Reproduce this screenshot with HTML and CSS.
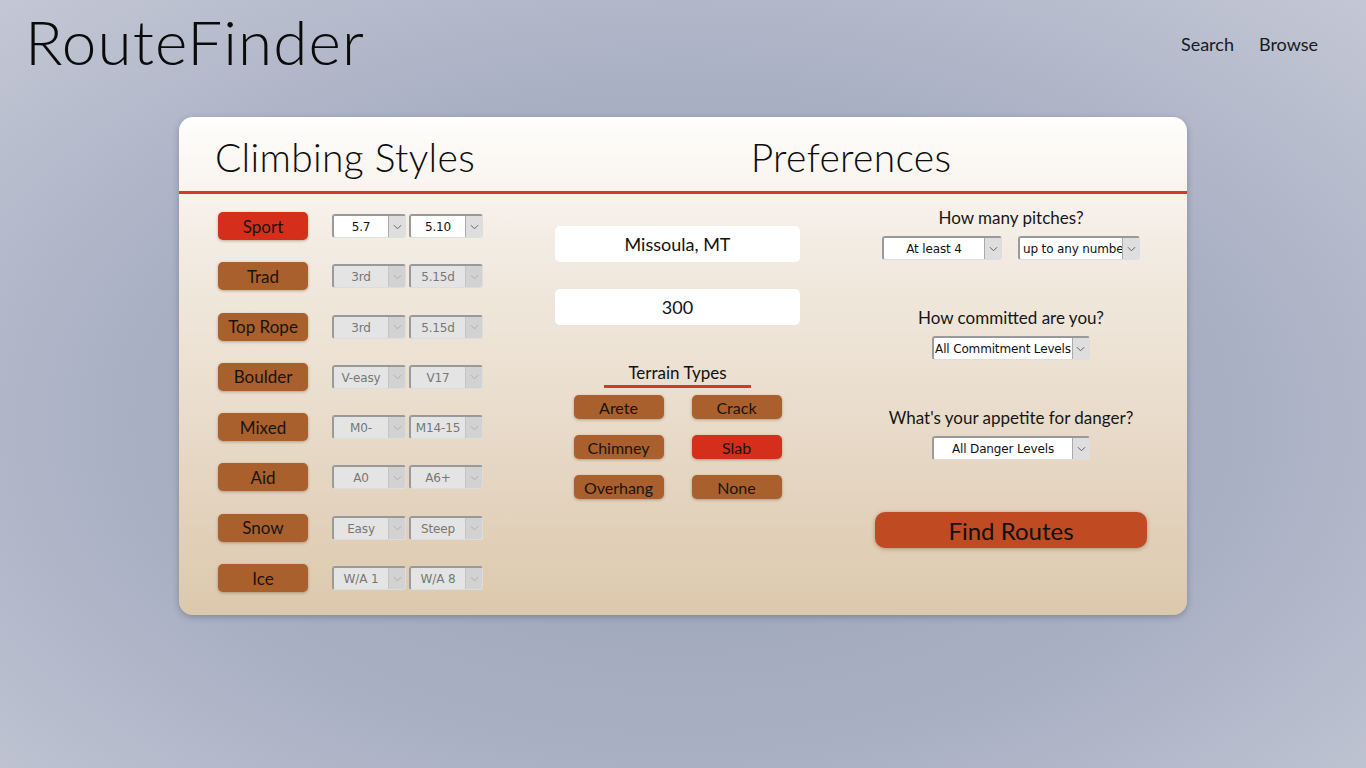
FILE: index.html
```html
<!DOCTYPE html>
<html lang="en">
<head>
<meta charset="utf-8">
<title>RouteFinder</title>
<link rel="stylesheet" href="styles.css">
</head>
<body>
<header class="topbar">
  <h1 class="logo">RouteFinder</h1>
  <nav class="nav">
    <a href="#">Search</a>
    <a href="#">Browse</a>
  </nav>
</header>

<main class="card">
  <div class="card-head">
    <h2>Climbing Styles</h2>
    <h2>Preferences</h2>
  </div>
  <div class="card-body">
    <section class="styles">
      <div class="style-row">
        <button class="chip active">Sport</button>
        <div class="sel-pair">
          <div class="sel"><span class="val">5.7</span><span class="arrow"><svg viewBox="0 0 10 6" width="9" height="6"><path d="M1 1l4 4 4-4" fill="none" stroke="#555" stroke-width="1"/></svg></span></div>
          <div class="sel"><span class="val">5.10</span><span class="arrow"><svg viewBox="0 0 10 6" width="9" height="6"><path d="M1 1l4 4 4-4" fill="none" stroke="#555" stroke-width="1"/></svg></span></div>
        </div>
      </div>
      <div class="style-row">
        <button class="chip">Trad</button>
        <div class="sel-pair">
          <div class="sel off"><span class="val">3rd</span><span class="arrow"><svg viewBox="0 0 10 6" width="9" height="6"><path d="M1 1l4 4 4-4" fill="none" stroke="#aaa" stroke-width="1"/></svg></span></div>
          <div class="sel off"><span class="val">5.15d</span><span class="arrow"><svg viewBox="0 0 10 6" width="9" height="6"><path d="M1 1l4 4 4-4" fill="none" stroke="#aaa" stroke-width="1"/></svg></span></div>
        </div>
      </div>
      <div class="style-row">
        <button class="chip">Top Rope</button>
        <div class="sel-pair">
          <div class="sel off"><span class="val">3rd</span><span class="arrow"><svg viewBox="0 0 10 6" width="9" height="6"><path d="M1 1l4 4 4-4" fill="none" stroke="#aaa" stroke-width="1"/></svg></span></div>
          <div class="sel off"><span class="val">5.15d</span><span class="arrow"><svg viewBox="0 0 10 6" width="9" height="6"><path d="M1 1l4 4 4-4" fill="none" stroke="#aaa" stroke-width="1"/></svg></span></div>
        </div>
      </div>
      <div class="style-row">
        <button class="chip">Boulder</button>
        <div class="sel-pair">
          <div class="sel off"><span class="val">V-easy</span><span class="arrow"><svg viewBox="0 0 10 6" width="9" height="6"><path d="M1 1l4 4 4-4" fill="none" stroke="#aaa" stroke-width="1"/></svg></span></div>
          <div class="sel off"><span class="val">V17</span><span class="arrow"><svg viewBox="0 0 10 6" width="9" height="6"><path d="M1 1l4 4 4-4" fill="none" stroke="#aaa" stroke-width="1"/></svg></span></div>
        </div>
      </div>
      <div class="style-row">
        <button class="chip">Mixed</button>
        <div class="sel-pair">
          <div class="sel off"><span class="val">M0-</span><span class="arrow"><svg viewBox="0 0 10 6" width="9" height="6"><path d="M1 1l4 4 4-4" fill="none" stroke="#aaa" stroke-width="1"/></svg></span></div>
          <div class="sel off"><span class="val">M14-15</span><span class="arrow"><svg viewBox="0 0 10 6" width="9" height="6"><path d="M1 1l4 4 4-4" fill="none" stroke="#aaa" stroke-width="1"/></svg></span></div>
        </div>
      </div>
      <div class="style-row">
        <button class="chip">Aid</button>
        <div class="sel-pair">
          <div class="sel off"><span class="val">A0</span><span class="arrow"><svg viewBox="0 0 10 6" width="9" height="6"><path d="M1 1l4 4 4-4" fill="none" stroke="#aaa" stroke-width="1"/></svg></span></div>
          <div class="sel off"><span class="val">A6+</span><span class="arrow"><svg viewBox="0 0 10 6" width="9" height="6"><path d="M1 1l4 4 4-4" fill="none" stroke="#aaa" stroke-width="1"/></svg></span></div>
        </div>
      </div>
      <div class="style-row">
        <button class="chip">Snow</button>
        <div class="sel-pair">
          <div class="sel off"><span class="val">Easy</span><span class="arrow"><svg viewBox="0 0 10 6" width="9" height="6"><path d="M1 1l4 4 4-4" fill="none" stroke="#aaa" stroke-width="1"/></svg></span></div>
          <div class="sel off"><span class="val">Steep</span><span class="arrow"><svg viewBox="0 0 10 6" width="9" height="6"><path d="M1 1l4 4 4-4" fill="none" stroke="#aaa" stroke-width="1"/></svg></span></div>
        </div>
      </div>
      <div class="style-row">
        <button class="chip">Ice</button>
        <div class="sel-pair">
          <div class="sel off"><span class="val">W/A 1</span><span class="arrow"><svg viewBox="0 0 10 6" width="9" height="6"><path d="M1 1l4 4 4-4" fill="none" stroke="#aaa" stroke-width="1"/></svg></span></div>
          <div class="sel off"><span class="val">W/A 8</span><span class="arrow"><svg viewBox="0 0 10 6" width="9" height="6"><path d="M1 1l4 4 4-4" fill="none" stroke="#aaa" stroke-width="1"/></svg></span></div>
        </div>
      </div>
    </section>

    <section class="middle">
      <div class="field">Missoula, MT</div>
      <div class="field field-second">300</div>
      <h3 class="terrain-title">Terrain Types</h3>
      <div class="terrain-grid">
        <button class="chip small">Arete</button>
        <button class="chip small">Crack</button>
        <button class="chip small">Chimney</button>
        <button class="chip small active">Slab</button>
        <button class="chip small">Overhang</button>
        <button class="chip small">None</button>
      </div>
    </section>

    <section class="prefs">
      <div class="pref">
        <p class="pref-label">How many pitches?</p>
        <div class="pref-controls">
          <div class="sel w120"><span class="val">At least 4</span><span class="arrow"><svg viewBox="0 0 10 6" width="9" height="6"><path d="M1 1l4 4 4-4" fill="none" stroke="#555" stroke-width="1"/></svg></span></div>
          <div class="sel w122"><span class="val left">up to any number</span><span class="arrow"><svg viewBox="0 0 10 6" width="9" height="6"><path d="M1 1l4 4 4-4" fill="none" stroke="#555" stroke-width="1"/></svg></span></div>
        </div>
      </div>
      <div class="pref">
        <p class="pref-label">How committed are you?</p>
        <div class="pref-controls">
          <div class="sel w158"><span class="val">All Commitment Levels</span><span class="arrow"><svg viewBox="0 0 10 6" width="9" height="6"><path d="M1 1l4 4 4-4" fill="none" stroke="#555" stroke-width="1"/></svg></span></div>
        </div>
      </div>
      <div class="pref">
        <p class="pref-label">What's your appetite for danger?</p>
        <div class="pref-controls">
          <div class="sel w158"><span class="val">All Danger Levels</span><span class="arrow"><svg viewBox="0 0 10 6" width="9" height="6"><path d="M1 1l4 4 4-4" fill="none" stroke="#555" stroke-width="1"/></svg></span></div>
        </div>
      </div>
      <button class="find">Find Routes</button>
    </section>
  </div>
</main>
</body>
</html>
```

FILE: styles.css
```css
* { box-sizing: border-box; }

html, body {
  margin: 0;
  padding: 0;
  height: 100%;
}

body {
  font-family: "Lato", "Open Sans", sans-serif;
  color: #111;
  background: radial-gradient(ellipse 75% 80% at 50% 55%, #98a1b7 0%, #a9b0c3 55%, #c6cad7 100%);
  min-height: 768px;
}

.topbar {
  display: flex;
  justify-content: space-between;
  align-items: flex-start;
  padding: 0 48px 0 25px;
  height: 117px;
}

.logo {
  margin: 6px 0 0;
  font-size: 62px;
  font-weight: 300;
  line-height: 70px;
  color: #0a0a0a;
  letter-spacing: 1.1px;
}

.nav {
  display: flex;
  gap: 25px;
  margin-top: 33px;
}

.nav a {
  font-size: 18px;
  color: #151a25;
  text-decoration: none;
  line-height: 22px;
}

.card {
  width: 1008px;
  margin: 0 0 0 179px;
  border-radius: 14px;
  background: linear-gradient(180deg, #fffefd 0%, #f3ece3 25%, #e9dccb 60%, #dcc8ad 100%);
  box-shadow: 0 2px 6px rgba(60, 60, 80, 0.35);
  overflow: hidden;
}

.card-head {
  display: grid;
  grid-template-columns: 1fr 2fr;
  height: 77px;
  border-bottom: 3px solid #d13a24;
}

.card-head h2 {
  margin: 0;
  text-align: center;
  font-size: 39px;
  font-weight: 300;
  line-height: 40px;
  padding-top: 20px;
  color: #0c0c0c;
  letter-spacing: 0.3px;
}

.card-head h2:first-child {
  padding-right: 4px;
}

.card-body {
  display: flex;
  padding: 18px 0 23px 39px;
}

.styles {
  width: 265px;
  display: flex;
  flex-direction: column;
  gap: 22.3px;
}

.style-row {
  display: flex;
  align-items: center;
  height: 28px;
}

.chip {
  font-family: inherit;
  width: 90px;
  height: 28px;
  border: none;
  border-radius: 5px;
  background: #a9602d;
  color: #1a1410;
  font-size: 17px;
  padding: 0;
  box-shadow: 0 1px 3px rgba(80, 40, 10, 0.35);
  cursor: pointer;
}

.chip.active {
  background: #d52f1c;
}

.chip.small {
  height: 24px;
  font-size: 16px;
  border-radius: 5px;
}

.sel-pair {
  display: flex;
  gap: 3px;
  margin-left: 24px;
}

.sel {
  display: flex;
  width: 74px;
  height: 24px;
  background: #fff;
  border-style: solid;
  border-width: 2px 1px 1px 2px;
  border-color: #999 #ddd #ddd #9a9a9a;
  border-radius: 3px;
  font-family: "DejaVu Sans", Verdana, sans-serif;
  font-size: 12px;
  letter-spacing: -0.15px;
  color: #111;
  overflow: hidden;
}

.sel .val {
  flex: 1;
  text-align: center;
  line-height: 23px;
  white-space: nowrap;
  overflow: hidden;
}

.sel .val.left {
  text-align: left;
  padding-left: 3px;
}

.sel .arrow {
  width: 17px;
  flex: none;
  background: #dedede;
  border-left: 1px solid #aaa;
  display: flex;
  align-items: center;
  justify-content: center;
}

.sel.off {
  background: #e4e4e4;
  color: #777;
}

.sel.off .arrow {
  background: #d2d2d2;
  border-left-color: #c4c4c4;
}

.sel.w120 { width: 120px; }
.sel.w122 { width: 122px; }
.sel.w158 { width: 158px; }

.middle {
  width: 245px;
  margin-left: 72px;
  display: flex;
  flex-direction: column;
  align-items: center;
}

.field {
  width: 245px;
  height: 36px;
  margin-top: 14px;
  background: #fff;
  border-radius: 5px;
  text-align: center;
  font-size: 18px;
  line-height: 36px;
  color: #111;
}

.field-second {
  margin-top: 27px;
}

.terrain-title {
  margin: 37px 0 0;
  padding: 0 24px 1px;
  font-size: 17px;
  font-weight: 400;
  line-height: 22px;
  border-bottom: 3px solid #d13a24;
  color: #111;
}

.terrain-grid {
  display: grid;
  grid-template-columns: 90px 90px;
  column-gap: 28px;
  row-gap: 16px;
  margin-top: 7px;
}

.prefs {
  width: 272px;
  margin-left: 75px;
  display: flex;
  flex-direction: column;
  align-items: center;
}

.pref {
  display: flex;
  flex-direction: column;
  align-items: center;
  height: 100px;
}

.pref:first-child {
  margin-top: -5px;
}

.pref-label {
  margin: 0;
  font-size: 17px;
  line-height: 22px;
  color: #151515;
}

.pref-controls {
  display: flex;
  gap: 16px;
  margin-top: 7px;
}

.find {
  font-family: inherit;
  width: 272px;
  height: 36px;
  margin-top: 5px;
  border: none;
  border-radius: 10px;
  background: #c04a22;
  color: #111;
  font-size: 24px;
  padding: 0;
  box-shadow: 0 1px 4px rgba(80, 30, 10, 0.35);
  cursor: pointer;
}
```
